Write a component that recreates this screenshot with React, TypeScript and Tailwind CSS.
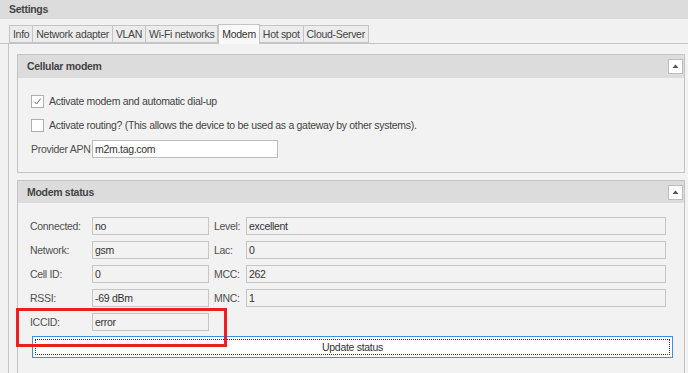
import React from "react";

const font = { fontFamily: "'Liberation Sans', Arial, sans-serif" };

function Collapse() {
  return (
    <div className="w-[15px] h-[15px] bg-white border border-[#bdbdbd] flex items-center justify-center">
      <svg width="7" height="5" viewBox="0 0 7 5">
        <path d="M3.5 0.5 L6.5 4 L0.5 4 Z" fill="#555" />
      </svg>
    </div>
  );
}

function Tab({ label, active }: { label: string; active?: boolean }) {
  return active ? (
    <div className="h-[20px] px-[3px] flex items-center bg-[#f9f9f9] border border-b-0 border-[#c4c4c4] text-[#333] -mb-px relative z-10">
      {label}
    </div>
  ) : (
    <div className="h-[18px] px-[3px] flex items-center bg-[#ececec] border border-[#c4c4c4] -ml-px first:ml-0 text-[#444]">
      {label}
    </div>
  );
}

function Check({ checked }: { checked?: boolean }) {
  return (
    <div className="w-[13px] h-[13px] bg-white border border-[#b0b0b0] flex items-center justify-center">
      {checked && (
        <svg width="9" height="9" viewBox="0 0 9 9">
          <path d="M1.5 4.8 L3.6 7 L7.6 1.6" stroke="#666" strokeWidth="1" fill="none" />
        </svg>
      )}
    </div>
  );
}

function Field({ value, w }: { value: string; w: string }) {
  return (
    <div className={`${w} h-[18px] border border-[#c6c6c6] bg-[#f2f2f2] flex items-center pl-[2px] text-[#333]`}>
      {value}
    </div>
  );
}

function StatusRow({ l1, v1, l2, v2 }: { l1: string; v1: string; l2?: string; v2?: string }) {
  return (
    <div className="h-[24px] flex items-center whitespace-nowrap">
      <div className="w-[62px] text-[#505050]">{l1}</div>
      <Field value={v1} w="w-[117px]" />
      {l2 !== undefined && (
        <>
          <div className="w-[37px] pl-[5px] text-[#505050]">{l2}</div>
          <Field value={v2 || ""} w="w-[420px]" />
        </>
      )}
    </div>
  );
}

export default function App() {
  return (
    <div className="w-[688px] h-[373px] bg-[#f1f1f1] overflow-hidden relative text-[10.5px] tracking-[-0.3px] leading-none text-[#333] whitespace-nowrap" style={font}>
      <div className="h-[19px] bg-[#dcdcdc] pl-[9px] flex items-center font-bold text-[#444]">Settings</div>
      <div className="h-[25px] flex items-end pl-[9px] border-b border-[#c4c4c4]">
        <Tab label="Info" />
        <Tab label="Network adapter" />
        <Tab label="VLAN" />
        <Tab label="Wi-Fi networks" />
        <Tab label="Modem" active />
        <Tab label="Hot spot" />
        <Tab label="Cloud-Server" />
      </div>
      <div className="ml-[8px] border-l border-[#c4c4c4] bg-[#f2f2f2] pl-[8px] pr-[3px] pt-[10px] h-[400px]">
        <div className="border border-[#c4c4c4]">
          <div className="h-[23px] bg-[#dcdcdc] flex items-center justify-between pl-[9px] pr-[1px]">
            <span className="font-bold text-[#444]">Cellular modem</span>
            <Collapse />
          </div>
          <div className="pl-[13px] pt-[11px] pb-[11px]">
            <div className="h-[24px] flex items-center gap-[5px]">
              <Check checked />
              <span className="text-[#444]">Activate modem and automatic dial-up</span>
            </div>
            <div className="h-[24px] flex items-center gap-[5px]">
              <Check />
              <span className="text-[#444]">Activate routing? (This allows the device to be used as a gateway by other systems).</span>
            </div>
            <div className="h-[24px] flex items-center">
              <span className="w-[61px] text-[#505050]">Provider APN</span>
              <div className="w-[186px] h-[18px] bg-white border border-[#bdbdbd] flex items-center pl-[2px] text-[#333]">m2m.tag.com</div>
            </div>
          </div>
        </div>
        <div className="border border-[#c4c4c4] mt-[7px] h-[300px]">
          <div className="h-[22px] bg-[#dcdcdc] flex items-center justify-between pl-[9px] pr-[1px]">
            <span className="font-bold text-[#444]">Modem status</span>
            <Collapse />
          </div>
          <div className="pl-[12px] pt-[11px] pr-[11px]">
            <StatusRow l1="Connected:" v1="no" l2="Level:" v2="excellent" />
            <StatusRow l1="Network:" v1="gsm" l2="Lac:" v2="0" />
            <StatusRow l1="Cell ID:" v1="0" l2="MCC:" v2="262" />
            <StatusRow l1="RSSI:" v1="-69 dBm" l2="MNC:" v2="1" />
            <StatusRow l1="ICCID:" v1="error" />
            <div className="mt-[2px] ml-[2px] h-[22px] bg-white border border-[#3d8ee0] p-[2px]">
              <div className="h-full border border-dotted border-[#333] flex items-center justify-center text-[#333]">
                Update status
              </div>
            </div>
          </div>
        </div>
      </div>
      <div className="absolute left-[16px] top-[308px] w-[211px] h-[39px] border-[3px] border-[#ee1c25]" />
    </div>
  );
}
